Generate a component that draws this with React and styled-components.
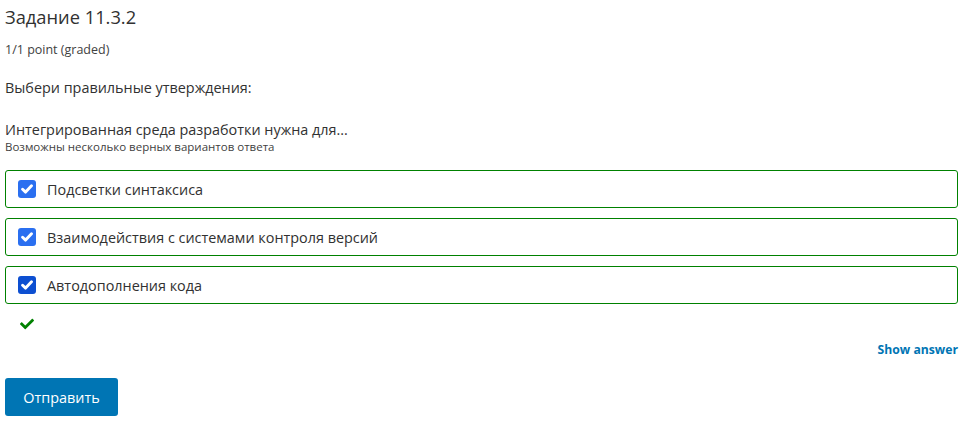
import React, { useState } from "react";
import styled, { createGlobalStyle } from "styled-components";
import { FaCheck } from "react-icons/fa";

const GlobalStyle = createGlobalStyle`
  body {
    margin: 0;
    background: #ffffff;
    font-family: "Open Sans", "Liberation Sans", sans-serif;
    color: #313131;
  }
`;

const Problem = styled.div`
  padding: 0 9px 0 5px;
`;

const Title = styled.h3`
  margin: 0;
  padding-top: 3px;
  font-size: 18.3px;
  font-weight: 400;
  line-height: 28px;
  color: #313131;
`;

const Points = styled.div`
  margin-top: 10px;
  font-size: 12.5px;
  line-height: 18px;
  color: #414141;
`;

const Prompt = styled.p`
  margin: 19px 0 0;
  font-size: 14.4px;
  line-height: 20px;
`;

const Question = styled.p`
  margin: 22px 0 0;
  font-size: 14.4px;
  line-height: 20px;
`;

const Hint = styled.div`
  font-size: 11.5px;
  line-height: 14px;
  color: #414141;
`;

const Choices = styled.div`
  display: flex;
  flex-direction: column;
  gap: 10px;
  margin-top: 16px;
`;

const Choice = styled.label`
  display: flex;
  align-items: center;
  gap: 11px;
  height: 38px;
  box-sizing: border-box;
  padding: 0 12px;
  border: 1px solid #008100;
  border-radius: 3px;
  font-size: 14.4px;
  color: #313131;
  cursor: pointer;
`;

const Box = styled.span`
  width: 18px;
  height: 18px;
  border-radius: 3px;
  background: ${(p) => (p.$focused ? "#0d4fd1" : "#2a6ff0")};
  display: flex;
  align-items: center;
  justify-content: center;
  flex-shrink: 0;
`;

const Status = styled.div`
  margin-top: 12px;
  padding-left: 15px;
  height: 14px;
  color: #008100;
  font-size: 14px;
`;

const Actions = styled.div`
  display: flex;
  justify-content: flex-end;
  margin-top: 11px;
`;

const ShowAnswer = styled.button`
  border: 0;
  background: none;
  padding: 0;
  font-family: inherit;
  font-size: 12.2px;
  font-weight: 700;
  color: #0075b4;
  line-height: 18px;
  cursor: pointer;
`;

const Submit = styled.button`
  margin-top: 19px;
  width: 113px;
  height: 38px;
  border: 0;
  border-radius: 3px;
  background: #0075b4;
  color: #ffffff;
  font-family: inherit;
  font-size: 14.4px;
  cursor: pointer;
`;

function Tick() {
  return (
    <svg width="12" height="10" viewBox="0 0 12 10">
      <path
        d="M1.6 5.2 L4.6 8.1 L10.5 1.7"
        fill="none"
        stroke="#fff"
        strokeWidth="2.9"
        strokeLinecap="round"
        strokeLinejoin="round"
      />
    </svg>
  );
}

const options = [
  "Подсветки синтаксиса",
  "Взаимодействия с системами контроля версий",
  "Автодополнения кода",
];

export default function App() {
  const [focused] = useState(2);
  return (
    <>
      <GlobalStyle />
      <Problem>
        <Title>Задание 11.3.2</Title>
        <Points>1/1 point (graded)</Points>
        <Prompt>Выбери правильные утверждения:</Prompt>
        <Question>Интегрированная среда разработки нужна для...</Question>
        <Hint>Возможны несколько верных вариантов ответа</Hint>
        <Choices>
          {options.map((text, i) => (
            <Choice key={i}>
              <Box $focused={i === focused}>
                <Tick />
              </Box>
              {text}
            </Choice>
          ))}
        </Choices>
        <Status>
          <FaCheck />
        </Status>
        <Actions>
          <ShowAnswer>Show answer</ShowAnswer>
        </Actions>
        <Submit>Отправить</Submit>
      </Problem>
    </>
  );
}
